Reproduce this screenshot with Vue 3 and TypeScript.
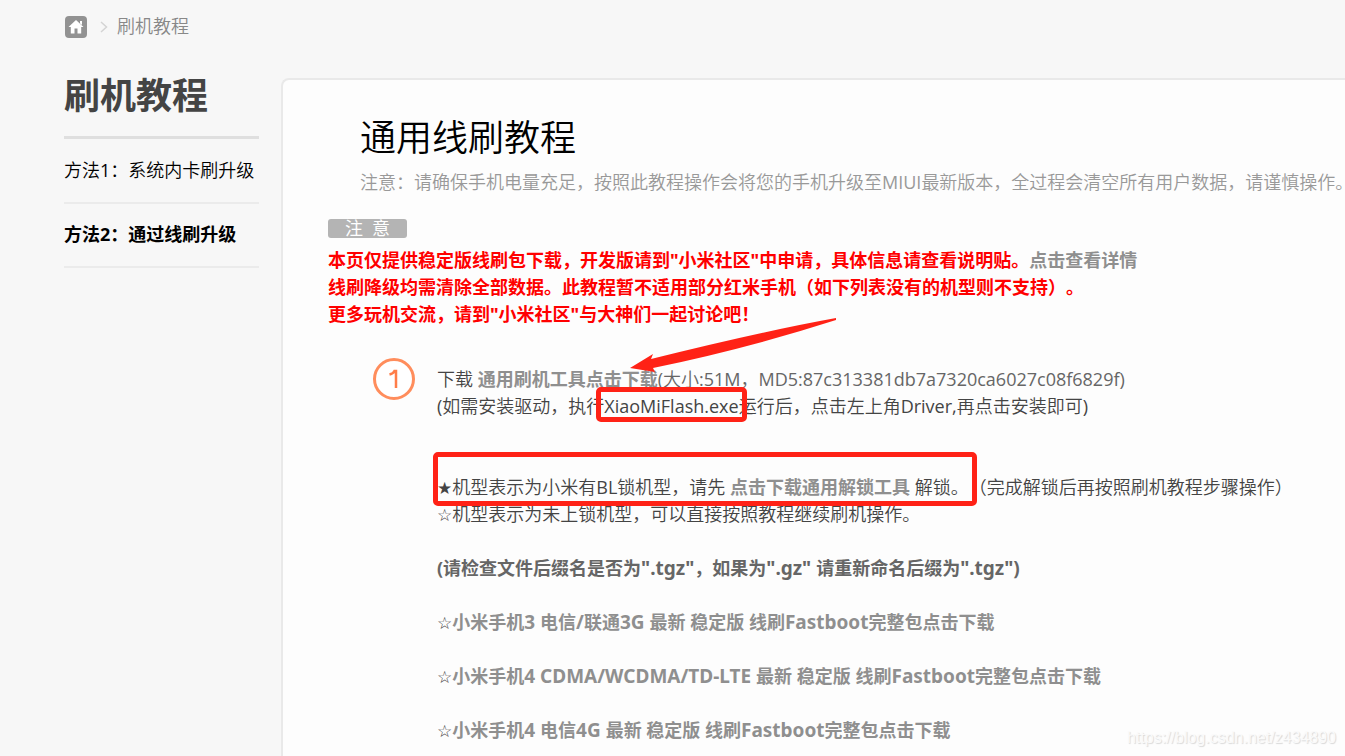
<script setup lang="ts">
interface Method {
  name: string
  title: string
  active: boolean
}

const methods: Method[] = [
  { name: '1', title: '系统内卡刷升级', active: false },
  { name: '2', title: '通过线刷升级', active: true },
]
</script>

<template>
  <div class="page">
    <nav class="crumbs" aria-label="位置">
      <a class="home" href="#" aria-label="首页">
        <svg width="22" height="22" viewBox="0 0 22 22">
          <rect width="22" height="22" rx="4" fill="#929292" />
          <path d="M11 4 L18.5 11 H16.2 V17.5 H12.5 V12.5 H9.5 V17.5 H5.8 V11 H3.5 Z" fill="#fff" />
          <path d="M15 5 H17 V9 L15 7.5 Z" fill="#fff" />
        </svg>
      </a>
      <svg class="chevron" width="8" height="14" viewBox="0 0 8 14">
        <path d="M1 2 L6.500 7 L1 12" fill="none" stroke="#d4d4d4" stroke-width="1.500" />
      </svg>
      <span>刷机教程</span>
    </nav>

    <div class="columns">
      <aside class="side">
        <h1>刷机教程</h1>
        <ul>
          <li v-for="m in methods" :key="m.name">
            <a href="#" :class="{ active: m.active }">方法<span class="en">{{ m.name }}</span>：{{ m.title }}</a>
          </li>
        </ul>
      </aside>

      <main class="panel">
        <header>
          <h2>通用线刷教程</h2>
          <p>注意：请确保手机电量充足，按照此教程操作会将您的手机升级至<span class="en">MIUI</span>最新版本，全过程会清空所有用户数据，请谨慎操作。</p>
        </header>

        <div class="badge">注&ensp;意</div>
        <p class="warning">
          本页仅提供稳定版线刷包下载，开发版请到"小米社区"中申请，具体信息请查看说明贴。<a href="#">点击查看详情</a><br>
          线刷降级均需清除全部数据。此教程暂不适用部分红米手机（如下列表没有的机型则不支持）。<br>
          更多玩机交流，请到"小米社区"与大神们一起讨论吧！
        </p>

        <section class="step">
          <svg class="number" width="44" height="44" viewBox="0 0 44 44" role="img" aria-label="1">
            <circle cx="22" cy="22" r="19.500" fill="#fff" stroke="#ff8d5c" stroke-width="3" />
            <path d="M17.500 17.500 Q21.500 16.500 22.500 14 H24 V31" fill="none" stroke="#ff7d48" stroke-width="2.500" />
          </svg>
          <div class="body">
            <p>下载 <a href="#">通用刷机工具点击下载</a><span class="soft"><span class="en">(</span>大小<span class="en">:51M</span>，<span class="en">MD5:87c313381db7a7320ca6027c08f6829f)</span></span></p>
            <p><span class="en">(</span>如需安装驱动，执行<span class="en">XiaoMiFlash.exe</span>运行后，点击左上角<span class="en">Driver,</span>再点击安装即可<span class="en">)</span></p>
            <p class="gap"><span class="star">★</span>机型表示为小米有<span class="en">BL</span>锁机型，请先 <a href="#">点击下载通用解锁工具</a> 解锁。（完成解锁后再按照刷机教程步骤操作）</p>
            <p><span class="star">☆</span>机型表示为未上锁机型，可以直接按照教程继续刷机操作。</p>
            <p class="line bold">(请检查文件后缀名是否为<span class="wide">".tgz"</span>，如果为<span class="wide">".gz" </span>请重新命名后缀为<span class="wide">".tgz")</span></p>
            <p class="line"><span class="star">☆</span><a href="#">小米手机<span class="wide">3 </span>电信<span class="wide">/</span>联通<span class="wide">3G </span>最新 稳定版 线刷<span class="wide">Fastboot</span>完整包点击下载</a></p>
            <p class="line"><span class="star">☆</span><a href="#">小米手机<span class="wide">4 CDMA/WCDMA/TD-LTE </span>最新 稳定版 线刷<span class="wide">Fastboot</span>完整包点击下载</a></p>
            <p class="line"><span class="star">☆</span><a href="#">小米手机<span class="wide">4 </span>电信<span class="wide">4G </span>最新 稳定版 线刷<span class="wide">Fastboot</span>完整包点击下载</a></p>
            <svg class="arrow" width="210" height="60" viewBox="0 0 210 60">
              <path d="M207 1 Q130 15 22 42 L24 37 L1 51 L26 55 L24 51 Q120 31 207 3 Z" fill="#ff2216" />
            </svg>
            <div class="mark mark-exe"></div>
            <div class="mark mark-unlock"></div>
          </div>
        </section>
      </main>
    </div>
    <div class="watermark">https://blog.csdn.net/z434890</div>
  </div>
</template>

<style>
body {
  margin: 0;
  background: #f7f7f7;
}
</style>

<style scoped>
.page {
  position: relative;
  box-sizing: border-box;
  height: 100vh;
  overflow: hidden;
  padding-left: 64px;
  font-family: "Noto Sans", "Noto Sans CJK SC", sans-serif;
  font-size: 18px;
  font-weight: 350;
  line-height: 27px;
  text-spacing-trim: space-all;
  white-space: nowrap;
  color: #000;
}
h1, h2, p, ul {
  margin: 0;
  padding: 0;
}
a {
  color: #8f8f8f;
  font-weight: 700;
  text-decoration: none;
}
.en {
  font-family: "Open Sans", sans-serif;
  font-weight: 400;
  line-height: 1;
}
.active .en {
  font-weight: 700;
}
.wide {
  font-size: 19px;
  line-height: 1;
}
.crumbs {
  display: flex;
  align-items: center;
  height: 54px;
  color: #888;
}
.crumbs span {
  padding-bottom: 2px;
}
.home {
  display: flex;
  margin-left: 1px;
}
.chevron {
  margin: 0 9px 0 13px;
}
.columns {
  display: flex;
  padding-top: 24px;
}
.side {
  flex: 0 0 195px;
  margin-right: 22px;
}
h1 {
  padding-bottom: 22px;
  border-bottom: 3px solid #dfdfdf;
  font-size: 36px;
  line-height: 36px;
  font-weight: 700;
  color: #444;
}
ul {
  list-style: none;
  padding-top: 1px;
}
li {
  border-bottom: 2px solid #ebebeb;
}
li a {
  display: block;
  padding-bottom: 2px;
  line-height: 60px;
  font-weight: 350;
  color: #000;
}
li a.active {
  font-weight: 700;
}
.panel {
  flex: 1;
  min-width: 0;
  height: 100vh;
  box-sizing: border-box;
  border: 2px solid #e9e9e9;
  border-right: 0;
  border-radius: 8px 0 0 0;
  padding: 34px 0 0 45px;
  background: #fdfdfd;
}
header {
  padding-left: 32px;
}
h2 {
  font-size: 36px;
  line-height: 48px;
  font-weight: 350;
}
header p {
  margin-top: 7px;
  color: #999;
}
.badge {
  width: 79px;
  margin: 23px 0 9px;
  border-radius: 3px;
  background: #b4b4b4;
  color: #fff;
  font-weight: 400;
  line-height: 19px;
  text-align: center;
}
.warning {
  font-weight: 700;
  color: #f00;
}
.step {
  display: flex;
  padding: 38px 0 0 44px;
}
.number {
  flex: none;
  margin: -9px 21px 0 0;
}
.body {
  position: relative;
  color: #444;
}
.soft {
  color: #666;
}
.gap {
  margin-top: 54px;
}
.line {
  margin-top: 27px;
}
.bold {
  font-weight: 700;
  color: #666;
}
.star {
  font-family: "DejaVu Sans", sans-serif;
  font-size: 17px;
  line-height: 1;
  font-weight: 400;
}
.arrow {
  position: absolute;
  left: 192px;
  top: -49px;
}
.mark {
  position: absolute;
  box-sizing: border-box;
  border: 5px solid #ff2216;
  border-radius: 5px;
}
.mark-exe {
  left: 159px;
  top: 21px;
  width: 151px;
  height: 35px;
}
.mark-unlock {
  left: -4px;
  top: 86px;
  width: 544px;
  height: 54px;
}
.watermark {
  position: absolute;
  right: 9px;
  bottom: 7px;
  font-family: "Liberation Sans", sans-serif;
  font-size: 16px;
  line-height: 22px;
  font-weight: 400;
  color: #fafafa;
  text-shadow: 1px 1px 1px #d8d8d8;
}
</style>
